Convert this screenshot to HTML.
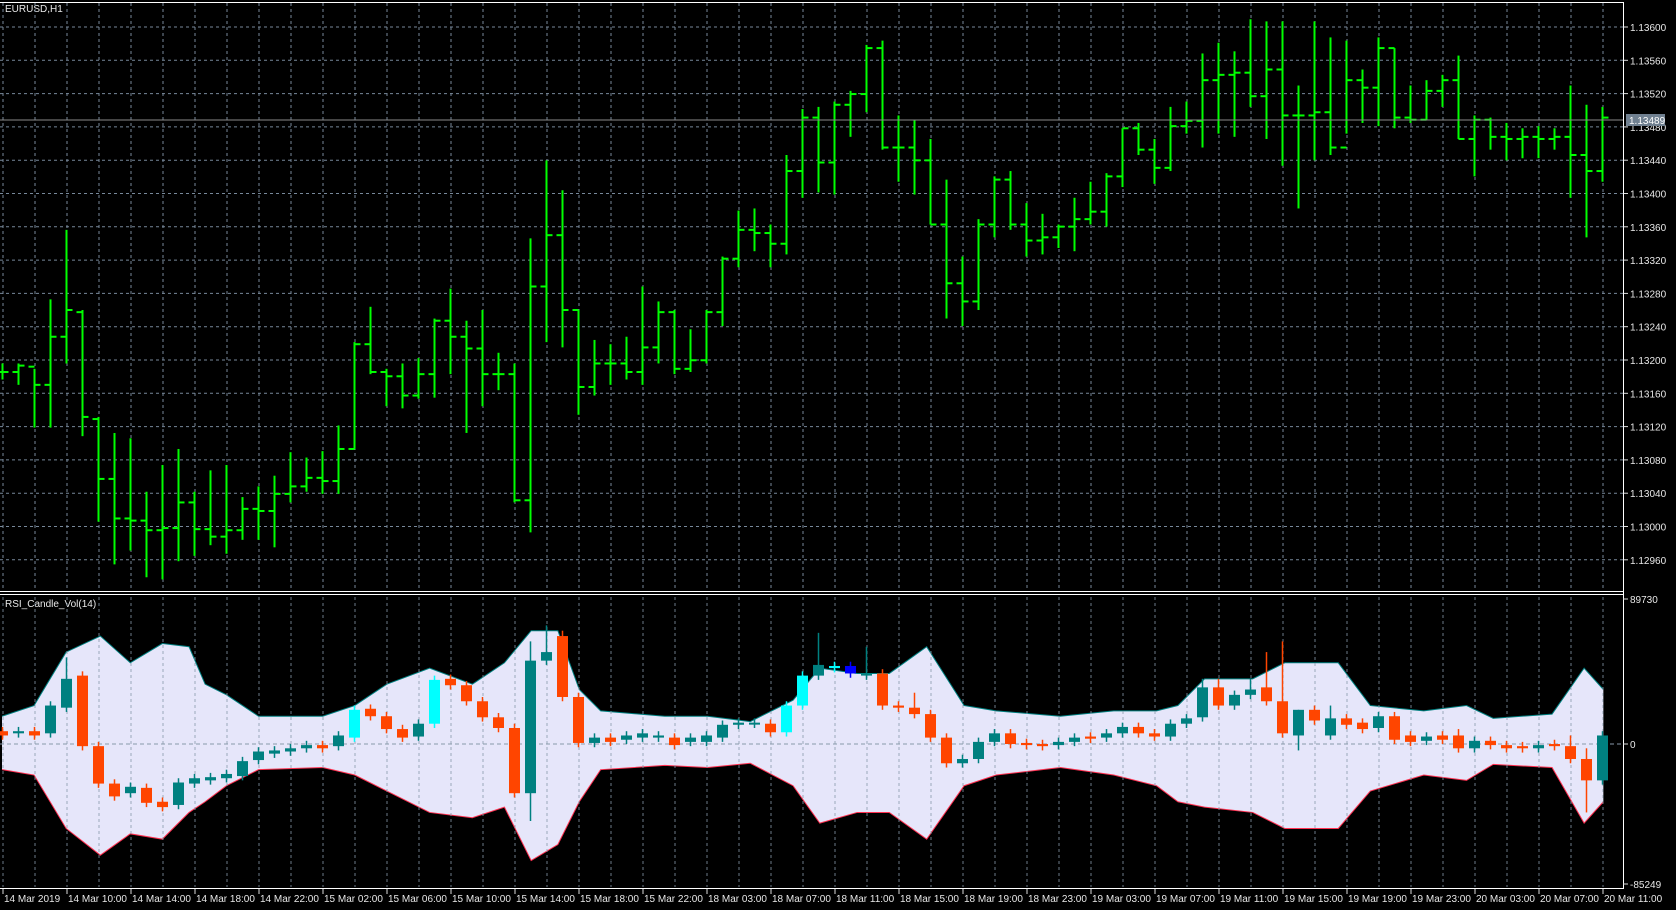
<!DOCTYPE html>
<html><head><meta charset="utf-8"><style>
html,body{margin:0;padding:0;background:#000;width:1676px;height:910px;overflow:hidden}
svg{display:block}
text{font-family:"Liberation Sans",sans-serif;font-size:10px;fill:#e8e8e8}
</style></head><body>
<svg id="s" width="1676" height="910" xmlns="http://www.w3.org/2000/svg">
<text x="5" y="12">EURUSD,H1</text>
<text x="5" y="607">RSI_Candle_Vol(14)</text>
</svg>
<script>
const S=1.069,NS='http://www.w3.org/2000/svg',svg=document.getElementById('s');
function el(t,a,txt){const e=document.createElementNS(NS,t);for(const k in a)e.setAttribute(k,a[k]);if(txt!==undefined)e.textContent=txt;svg.appendChild(e);return e;}
const bx=i=>2+16*i;
// grid main
for(let k=0;k<17;k++){const y=27+33.3*k;el('line',{x1:0,y1:y,x2:1623,y2:y,stroke:'#77889a','stroke-dasharray':'3,3','stroke-width':1});
 el('line',{x1:1623,y1:y,x2:1628,y2:y,stroke:'#ddd'});el('text',{x:1630,y:y+4},(1.136-0.0004*k).toFixed(5));}
for(let i=0;i<=100;i+=2){const x=bx(i)+1;el('line',{x1:x,y1:3,x2:x,y2:590,stroke:'#77889a','stroke-dasharray':'3,3'});}
// envelope
const env=[[0,670,720],[30,660,725],[60,610,775],[92,595,800],[120,620,780],[150,602,785],[175,605,760],[190,640,750],[210,650,735],[240,670,720],[300,670,718],[330,660,725],[360,640,740],[400,625,760],[440,640,765],[470,620,755],[495,590,805],[520,590,790],[540,645,750],[560,665,720],[620,670,716],[660,670,718],[700,675,714],[740,655,735],[765,625,770],[800,630,760],[830,630,760],[865,605,785],[900,660,735],[930,665,725],[990,670,718],[1040,665,725],[1080,665,735],[1100,660,750],[1125,635,755],[1170,635,760],[1200,620,775],[1250,620,775],[1280,660,740],[1330,665,725],[1370,660,730],[1395,672,715],[1450,668,718],[1480,625,770],[1498,645,750]];
let up=env.map(p=>(p[0]*S+2)+','+(p[1]*S)).join(' '),lo=env.slice().reverse().map(p=>(p[0]*S+2)+','+(p[2]*S)).join(' ');
el('polygon',{points:up+' '+lo,fill:'#e6e6fa'});
el('polyline',{points:up,fill:'none',stroke:'#008080','stroke-width':1});
el('polyline',{points:env.map(p=>(p[0]*S+2)+','+(p[2]*S)).join(' '),fill:'none',stroke:'#ff3050','stroke-width':1});
for(let i=0;i<=100;i+=2){const x=bx(i)+1;el('line',{x1:x,y1:597,x2:x,y2:887,stroke:'#8899aa','stroke-dasharray':'3,3',opacity:.8});}
el('line',{x1:0,y1:744,x2:1623,y2:744,stroke:'#8899aa','stroke-dasharray':'4,3'});
// OHLC bars
const B=[[340,355,348,348],[340,360,348,342],[345,400,343,360],[280,400,360,315],[215,340,315,290],[290,408,292,390],[390,488,392,448],[405,528,448,485],[410,515,485,487],[460,540,487,496],[435,542,496,494],[420,525,494,470],[460,520,470,495],[440,510,495,502],[435,518,502,496],[465,505,496,476],[455,505,476,478],[445,512,478,462],[423,470,462,455],[428,460,455,447],[422,462,447,450],[398,462,450,420],[320,420,420,322],[287,350,322,348],[345,380,348,352],[340,382,352,370],[335,373,370,350],[298,372,350,300],[270,350,300,315],[300,405,315,326],[290,380,326,350],[330,365,350,350],[340,470,350,468],[223,498,468,268],[150,320,268,220],[178,325,220,290],[290,388,290,362],[318,370,362,340],[322,360,340,340],[315,355,340,348],[268,360,348,325],[282,340,325,292],[290,350,292,345],[308,348,345,337],[290,340,337,292],[240,305,292,242],[197,250,242,215],[195,235,215,218],[210,250,218,228],[145,238,228,160],[102,185,160,110],[100,180,110,152],[95,182,152,98],[85,128,98,88],[42,105,88,45],[38,140,45,138],[108,170,138,138],[112,182,138,150],[130,210,150,210],[168,298,210,265],[240,305,265,282],[205,290,282,210],[165,222,210,168],[160,215,168,210],[190,240,210,225],[200,238,225,222],[210,232,222,212],[185,235,212,205],[170,210,205,198],[162,212,198,165],[120,175,165,120],[115,145,120,140],[130,172,140,157],[100,160,157,118],[95,125,118,113],[50,138,113,75],[40,125,75,70],[48,128,70,68],[18,100,68,90],[20,130,90,65],[20,155,65,108],[80,195,108,108],[20,150,108,105],[35,145,105,138],[38,125,138,75],[65,115,75,82],[35,118,82,45],[45,120,45,110],[80,115,110,112],[75,112,112,85],[70,100,85,75],[52,130,75,130],[108,165,130,112],[110,140,112,128],[115,150,128,130],[120,148,130,128],[118,148,128,130],[120,140,130,128],[80,185,128,145],[98,222,145,160],[100,170,160,110]];
B.forEach((b,i)=>{const x=bx(i)+0.5,g='#00ff00';
 el('line',{x1:x,y1:b[0]*S,x2:x,y2:b[1]*S,stroke:g,'stroke-width':2});
 el('line',{x1:x-6,y1:b[2]*S,x2:x,y2:b[2]*S,stroke:g,'stroke-width':2});
 el('line',{x1:x,y1:b[3]*S,x2:x+6,y2:b[3]*S,stroke:g,'stroke-width':2});});
// indicator candles [o,c,color,hi,lo]
const T='#008080',O='#ff4500',A='#00ffff',BL='#0000ff';
const C=[[684,688,O],[684,686,T],[684,688,O],[660,686,T],[635,662,T,615],[632,698,O],[698,733,O],[733,745,O],[736,742,T],[737,751,O],[750,755,O],[732,753,T],[728,733,T],[727,730,T],[724,728,T],[712,726,T],[703,711,T],[702,705,T],[700,703,T],[697,700,T],[697,700,O],[688,698,T],[664,690,A],[663,670,O],[670,682,O],[682,690,O],[677,689,T],[636,677,A],[635,641,O],[641,656,O],[656,671,O],[671,681,O],[681,742,O],[618,742,T,600,768],[610,618,T,585],[595,652,O,590],[652,695,O],[690,695,T],[690,694,O],[688,692,T],[686,690,T],[688,690,T],[690,697,O],[690,694,T],[688,694,T],[678,690,T],[676,678,T],[676,677,T],[677,685,O],[660,685,A],[632,660,A],[622,632,T,592],[623,625,A],[623,630,BL],[630,632,T,605],[630,660,O],[660,662,O],[662,668,O,648],[668,690,O],[690,714,O],[710,714,T],[694,710,T],[686,694,T],[686,696,O],[695,697,O],[696,698,O],[694,697,T],[690,694,T],[689,691,O],[686,690,T],[680,686,T],[680,686,O],[686,689,O],[677,689,T],[672,677,T],[643,671,T,635],[643,660,O,635],[650,660,T],[645,650,T,635],[643,656,O,610],[656,686,O,600],[664,688,T,664,702],[664,674,O],[672,688,T,660],[672,678,O],[676,682,O],[670,681,T],[670,692,O],[688,694,O],[689,693,T],[688,692,O],[688,700,O,682],[693,700,T],[693,697,O],[697,700,O],[698,700,O],[697,700,T],[696,698,O],[698,710,O,688],[710,730,O,700,760],[688,730,T]];
C.forEach((c,i)=>{const x=bx(i),t=Math.min(c[0],c[1])*S,bt=Math.max(c[0],c[1])*S;
 const hi=(c[3]||Math.min(c[0],c[1])-4)*S,lo=(c[4]||Math.max(c[0],c[1])+4)*S;
 el('line',{x1:x+0.5,y1:hi,x2:x+0.5,y2:lo,stroke:c[2],'stroke-width':1.5});
 el('rect',{x:x-5,y:t,width:11,height:Math.max(2,bt-t),fill:c[2]});});
// frames
el('line',{x1:0,y1:2.5,x2:1623.5,y2:2.5,stroke:'#fff'});
el('line',{x1:1623.5,y1:2,x2:1623.5,y2:889,stroke:'#fff'});
el('line',{x1:0,y1:591.5,x2:1624,y2:591.5,stroke:'#fff'});
el('line',{x1:0,y1:594.5,x2:1624,y2:594.5,stroke:'#fff'});
el('line',{x1:0,y1:888.5,x2:1624,y2:888.5,stroke:'#fff'});
// current price
el('line',{x1:0,y1:120,x2:1623,y2:120,stroke:'#8a8a8a'});
el('rect',{x:1626,y:114,width:39,height:12,fill:'#708090'});
el('text',{x:1629,y:124,style:'fill:#fff'},'1.13489');
// indicator axis
[['89730',599],['0',744],['-85249',884]].forEach(a=>{el('line',{x1:1623,y1:a[1],x2:1628,y2:a[1],stroke:'#ddd'});el('text',{x:1630,y:a[1]+4},a[0]);});
// time axis
const L=['14 Mar 2019','14 Mar 10:00','14 Mar 14:00','14 Mar 18:00','14 Mar 22:00','15 Mar 02:00','15 Mar 06:00','15 Mar 10:00','15 Mar 14:00','15 Mar 18:00','15 Mar 22:00','18 Mar 03:00','18 Mar 07:00','18 Mar 11:00','18 Mar 15:00','18 Mar 19:00','18 Mar 23:00','19 Mar 03:00','19 Mar 07:00','19 Mar 11:00','19 Mar 15:00','19 Mar 19:00','19 Mar 23:00','20 Mar 03:00','20 Mar 07:00','20 Mar 11:00'];
L.forEach((t,k)=>{const x=3+64*k;el('line',{x1:x,y1:889,x2:x,y2:894,stroke:'#ddd'});el('text',{x:x+1,y:902},t);});
</script>
</body></html>
